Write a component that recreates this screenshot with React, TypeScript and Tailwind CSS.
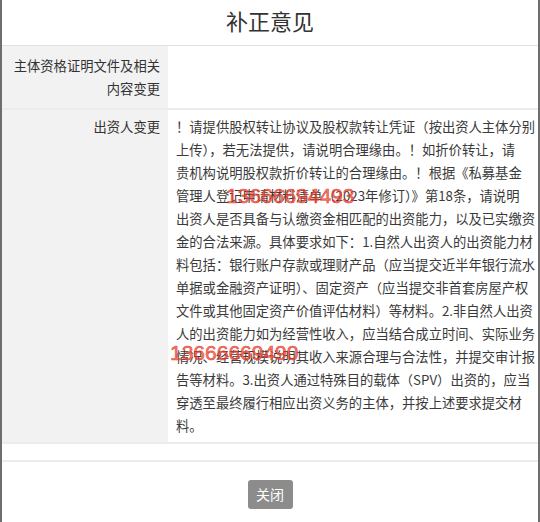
import React from "react";

const lines = [
  "！请提供股权转让协议及股权款转让凭证（按出资人主体分别",
  "上传），若无法提供，请说明合理缘由。！如折价转让，请",
  "贵机构说明股权款折价转让的合理缘由。！根据《私募基金",
  "管理人登记申请材料清单（2023年修订）》第18条，请说明",
  "出资人是否具备与认缴资金相匹配的出资能力，以及已实缴资",
  "金的合法来源。具体要求如下：1.自然人出资人的出资能力材",
  "料包括：银行账户存款或理财产品（应当提交近半年银行流水",
  "单据或金融资产证明）、固定资产（应当提交非首套房屋产权",
  "文件或其他固定资产价值评估材料）等材料。2.非自然人出资",
  "人的出资能力如为经营性收入，应当结合成立时间、实际业务",
  "情况、经营规模说明其收入来源合理与合法性，并提交审计报",
  "告等材料。3.出资人通过特殊目的载体（SPV）出资的，应当",
  "穿透至最终履行相应出资义务的主体，并按上述要求提交材",
  "料。",
];

export default function App() {
  return (
    <div className="w-[540px] h-[522px] overflow-hidden bg-white border-x-2 border-[#6e6e6e] flex flex-col font-['Noto_Sans_CJK_SC',sans-serif] text-[#333]">
      <div className="h-[46px] shrink-0 flex justify-center pt-[4px] text-[22px] leading-[32px] border-b border-[#e2e2e2]">
        补正意见
      </div>
      <div className="grid grid-cols-[166px_1fr] border-b-2 border-[#ececec]">
        <div className="bg-[#f2f2f2] text-right pr-[8px] py-[8px] text-[13.3px] leading-[23px]">
          主体资格证明文件及相关
          <br />
          内容变更
        </div>
        <div></div>
      </div>
      <div className="grid grid-cols-[166px_1fr] border-b-2 border-[#ececec]">
        <div className="bg-[#f2f2f2] text-right pr-[8px] py-[5px] text-[13.3px] leading-[23px]">
          出资人变更
        </div>
        <div className="relative pl-[8px] py-[5px] text-[13.3px] leading-[23px] text-[#3a3a3a]">
          {lines.map((l, i) => (
            <div key={i} className="whitespace-nowrap">
              {l}
            </div>
          ))}
          <div className="absolute left-[58px] top-[74px] whitespace-nowrap font-['Liberation_Sans',sans-serif] text-[21px] leading-[24px] text-[rgba(232,70,50,0.7)] [-webkit-text-stroke:0.6px_rgba(228,52,36,0.9)]">
            13666694493
          </div>
          <div className="absolute left-[2px] top-[231px] whitespace-nowrap font-['Liberation_Sans',sans-serif] text-[21px] leading-[24px] text-[rgba(232,70,50,0.7)] [-webkit-text-stroke:0.6px_rgba(228,52,36,0.9)]">
            13666669490
          </div>
        </div>
      </div>
      <div className="h-[18px] shrink-0 border-b-2 border-[#ececec]"></div>
      <div className="flex-1 flex justify-center pt-[18px]">
        <button className="w-[45px] h-[29px] bg-[#8c8c8c] text-white rounded-[3px] text-[14px] leading-[29px]">
          关闭
        </button>
      </div>
    </div>
  );
}
